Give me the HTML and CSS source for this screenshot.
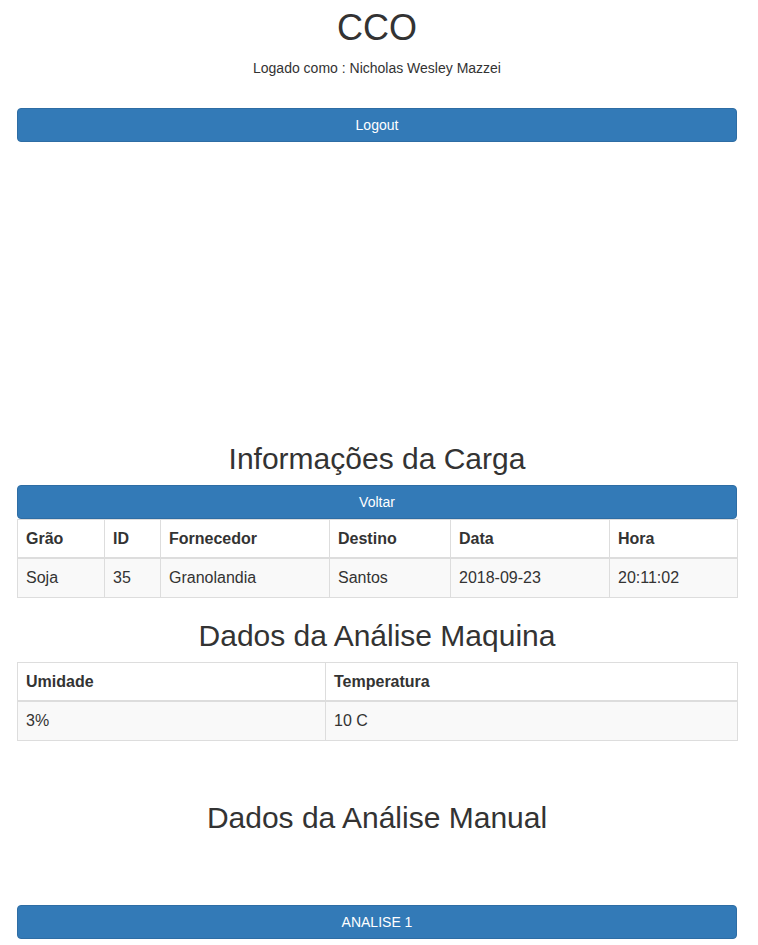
FILE: index.html
```html
<!DOCTYPE html>
<html lang="pt-BR">
<head>
<meta charset="utf-8">
<title>CCO</title>
<link rel="stylesheet" href="styles.css">
</head>
<body>
<div class="container">
  <h1 class="title">CCO</h1>
  <p class="user">Logado como : Nicholas Wesley Mazzei</p>
  <button class="btn btn-logout" type="button">Logout</button>
  <div class="blank-area"></div>

  <h2 class="section-title">Informações da Carga</h2>
  <button class="btn" type="button">Voltar</button>
  <table class="table table-carga">
    <colgroup>
      <col class="c-grao"><col class="c-id"><col class="c-forn"><col class="c-dest"><col class="c-data"><col class="c-hora">
    </colgroup>
    <thead>
      <tr><th>Grão</th><th>ID</th><th>Fornecedor</th><th>Destino</th><th>Data</th><th>Hora</th></tr>
    </thead>
    <tbody>
      <tr><td>Soja</td><td>35</td><td>Granolandia</td><td>Santos</td><td>2018-09-23</td><td>20:11:02</td></tr>
    </tbody>
  </table>

  <h2 class="section-title">Dados da Análise Maquina</h2>
  <table class="table table-maquina">
    <colgroup>
      <col class="c-umid"><col class="c-temp">
    </colgroup>
    <thead>
      <tr><th>Umidade</th><th>Temperatura</th></tr>
    </thead>
    <tbody>
      <tr><td>3%</td><td>10 C</td></tr>
    </tbody>
  </table>

  <h2 class="section-title">Dados da Análise Manual</h2>
  <button class="btn btn-analise" type="button">ANALISE 1</button>
</div>
</body>
</html>
```

FILE: styles.css
```css
html, body {
  margin: 0;
  padding: 0;
  background: #fff;
}
body {
  font-family: "Liberation Sans", Arial, sans-serif;
  font-size: 14px;
  line-height: 20px;
  color: #333;
}
.container {
  width: 720px;
  margin-left: 17px;
  padding-top: 8px;
}
.title {
  margin: 0 0 10px;
  font-size: 36px;
  font-weight: 500;
  line-height: 1.1;
  text-align: center;
}
.user {
  margin: 0 0 10px;
  text-align: center;
}
.btn {
  display: block;
  width: 100%;
  height: 34px;
  margin: 0;
  padding: 6px 12px;
  box-sizing: border-box;
  font-family: inherit;
  font-size: 14px;
  line-height: 20px;
  color: #fff;
  background: #337ab7;
  border: 1px solid #2e6da4;
  border-radius: 4px;
  text-align: center;
  cursor: pointer;
}
.btn-logout {
  margin-top: 30px;
}
.blank-area {
  height: 280px;
}
.section-title {
  margin: 20px 0 10px;
  font-size: 30px;
  font-weight: 500;
  line-height: 33px;
  text-align: center;
}
.table {
  width: 100%;
  table-layout: fixed;
  border-collapse: collapse;
  border-spacing: 0;
  border: 1px solid #ddd;
  margin-bottom: 21px;
  font-size: 16px;
}
.table th,
.table td {
  padding: 8px;
  line-height: 21.5px;
  text-align: left;
  vertical-align: top;
  border: 1px solid #ddd;
  white-space: nowrap;
}
.table th {
  font-weight: bold;
  border-bottom: 2px solid #ddd;
}
.table tbody tr:nth-of-type(odd) {
  background: #f9f9f9;
}
.table-maquina {
  margin-bottom: 60px;
}
.c-grao { width: 87px; }
.c-id { width: 56px; }
.c-forn { width: 169px; }
.c-dest { width: 121px; }
.c-data { width: 159px; }
.c-hora { width: 128px; }
.c-umid { width: 308px; }
.c-temp { width: 412px; }
.btn-analise {
  margin-top: 71px;
}
```
